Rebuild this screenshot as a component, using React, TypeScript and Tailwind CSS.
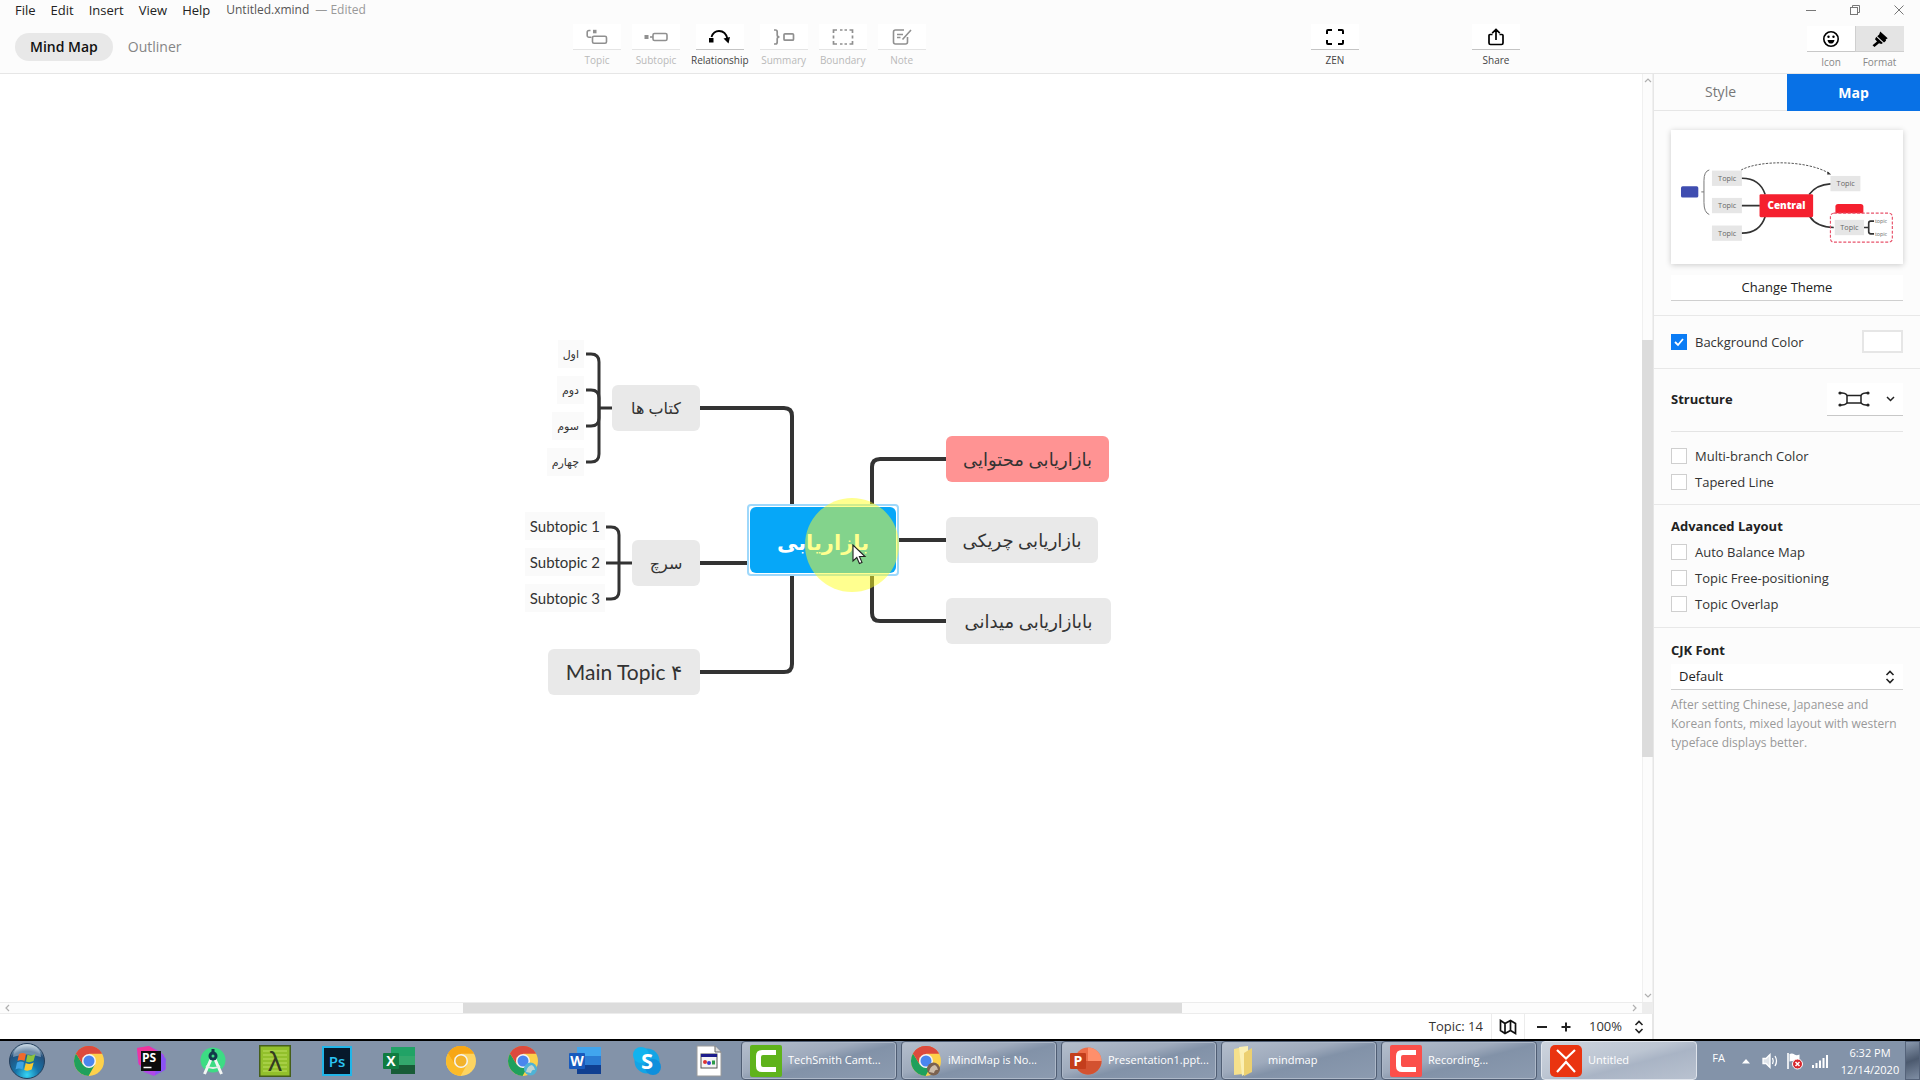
import React, { ReactNode } from "react";

/* ---------- header ---------- */

type ToolProps = { label: string; active?: boolean; children: ReactNode };

function Tool({ label, active = false, children }: ToolProps) {
  return (
    <button
      type="button"
      className={
        "flex min-w-12 flex-col items-center text-[10px] leading-4 " +
        (active ? "text-[#444]" : "text-[#b9b9b9]")
      }
    >
      <span
        className={
          "flex h-[26px] w-12 items-center justify-center border-b bg-white " +
          (active ? "border-[#c4c4c4] text-black" : "border-[#e4e4e4] text-[#909090]")
        }
      >
        {children}
      </span>
      <span className="mt-0.5">{label}</span>
    </button>
  );
}

function TopicIcon() {
  return (
    <svg width="22" height="16" viewBox="0 0 22 16" fill="none" stroke="currentColor" strokeWidth="1.6">
      <path d="M4.5 1.5H3A1.8 1.8 0 0 0 1.2 3.3V6.500A1.8 1.8 0 0 0 3 8.300h2.500" />
      <rect x="6.500" y="7.200" width="14" height="7" rx="1.5" />
      <rect x="7" y="0.800" width="3.500" height="3.500" fill="currentColor" stroke="none" />
    </svg>
  );
}

function SubtopicIcon() {
  return (
    <svg width="24" height="12" viewBox="0 0 24 12" fill="none" stroke="currentColor" strokeWidth="1.6">
      <rect x="0.500" y="4" width="4" height="4" fill="currentColor" stroke="none" />
      <path d="M6 6h3" />
      <rect x="9" y="2.500" width="14" height="7" rx="1.5" />
    </svg>
  );
}

function RelationshipIcon() {
  return (
    <svg width="24" height="16" viewBox="0 0 24 16" fill="none" stroke="currentColor" strokeWidth="1.8">
      <rect x="1" y="9" width="4.500" height="4.500" fill="currentColor" stroke="none" />
      <path d="M3.500 8C5 3.500 8 2 11 2c4.500 0 7.500 3.500 8.500 8" />
      <path d="M15.500 9.500l6.500-1.500-1.500 6.500z" fill="currentColor" stroke="none" />
    </svg>
  );
}

function SummaryIcon() {
  return (
    <svg width="22" height="16" viewBox="0 0 22 16" fill="none" stroke="currentColor" strokeWidth="1.7">
      <path d="M1 1h1.500Q4.200 1 4.200 3v3Q4.200 8 6.500 8 4.200 8 4.200 10v3q0 2-1.700 2H1" />
      <rect x="11" y="4.800" width="9.500" height="6.400" rx="1" />
    </svg>
  );
}

function BoundaryIcon() {
  return (
    <svg width="22" height="18" viewBox="0 0 22 18" fill="none" stroke="currentColor" strokeWidth="1.7">
      <path d="M1.500 5V2H5M8 2h2.500M12.500 2H15M17.500 2h3v3M20.500 7.500v3M20.500 13v3h-3M15 16h-2.500M10.500 16H8M5 16H1.500v-3M1.500 10.500v-3" />
    </svg>
  );
}

function NoteIcon() {
  return (
    <svg width="20" height="18" viewBox="0 0 20 18" fill="none" stroke="currentColor" strokeWidth="1.6">
      <path d="M12 2H3.500Q1.500 2 1.500 4v10q0 2 2 2h10q2 0 2-2V9" />
      <path d="M5 6.500h6M5 9.500h3.500M19 2l-8.500 9.500" />
    </svg>
  );
}

function ZenIcon() {
  return (
    <svg width="20" height="18" viewBox="0 0 20 18" fill="none" stroke="currentColor" strokeWidth="2">
      <path d="M2 6V3q0-1 1-1h4M13 2h4q1 0 1 1v3M18 12v3q0 1-1 1h-4M7 16H3q-1 0-1-1v-3" />
    </svg>
  );
}

function ShareIcon() {
  return (
    <svg width="18" height="18" viewBox="0 0 18 18" fill="none" stroke="currentColor" strokeWidth="1.7">
      <path d="M5.500 6.500H3q-1 0-1 1V15q0 1.500 1.500 1.500h11Q16 16.500 16 15V7.500q0-1-1-1h-2.500M9 12V1.800M5.200 5.200L9 1.500l3.800 3.700" />
    </svg>
  );
}

function Header() {
  return (
    <header className="flex h-[74px] shrink-0 flex-col border-b border-[#e6e6e6] bg-[#fcfcfc]">
      <div className="flex h-5 items-center justify-between pl-[15px]">
        <div className="flex items-center text-[13px] leading-5">
          <nav className="flex gap-[15px] text-[#222]">
            <button type="button">File</button>
            <button type="button">Edit</button>
            <button type="button">Insert</button>
            <button type="button">View</button>
            <button type="button">Help</button>
          </nav>
          <span className="ml-4 text-xs text-[#555]">Untitled.xmind</span>
          <span className="ml-1.5 text-xs text-[#999]">— Edited</span>
        </div>
        <div className="flex items-center gap-8 pr-[15px] text-[#777]">
          <button type="button" aria-label="Minimize">
            <svg width="12" height="12" viewBox="0 0 12 12" stroke="currentColor"><path d="M1 6.500h10" /></svg>
          </button>
          <button type="button" aria-label="Restore">
            <svg width="12" height="12" viewBox="0 0 12 12" fill="none" stroke="currentColor">
              <rect x="1.500" y="3.500" width="7" height="7" />
              <path d="M3.500 3.500v-2h7v7h-2" />
            </svg>
          </button>
          <button type="button" aria-label="Close">
            <svg width="12" height="12" viewBox="0 0 12 12" stroke="currentColor"><path d="M1.500 1.500l9 9M10.500 1.500l-9 9" /></svg>
          </button>
        </div>
      </div>
      <div className="flex flex-1 items-start">
        <div className="mt-[13px] flex w-[573px] items-center pl-[15px] text-sm">
          <button type="button" className="h-7 rounded-full bg-[#e8e8e8] px-[15px] font-semibold text-[#111]">
            Mind Map
          </button>
          <button type="button" className="ml-[15px] h-7 text-[#858585]">Outliner</button>
        </div>
        <div className="flex gap-[11px] pt-1">
          <Tool label="Topic"><TopicIcon /></Tool>
          <Tool label="Subtopic"><SubtopicIcon /></Tool>
          <Tool label="Relationship" active><RelationshipIcon /></Tool>
          <Tool label="Summary"><SummaryIcon /></Tool>
          <Tool label="Boundary"><BoundaryIcon /></Tool>
          <Tool label="Note"><NoteIcon /></Tool>
        </div>
        <div className="ml-auto flex pt-1 pr-4">
          <Tool label="ZEN" active><ZenIcon /></Tool>
          <div className="ml-[113px]">
            <Tool label="Share" active><ShareIcon /></Tool>
          </div>
          <div className="mt-0.5 ml-[287px] flex text-[10px] leading-4 text-[#888]">
            <button type="button" className="flex w-12 flex-col items-center">
              <span className="flex h-[26px] w-full items-center justify-center border-b border-[#c8c8c8] bg-white text-black">
                <svg width="18" height="18" viewBox="0 0 18 18" fill="none" stroke="currentColor" strokeWidth="1.6">
                  <circle cx="9" cy="9" r="7.200" />
                  <path d="M5.500 10h7c-.3 2.500-1.800 3.600-3.500 3.600S5.800 12.500 5.500 10z" fill="currentColor" stroke="none" />
                  <circle cx="6.500" cy="6.800" r="1.200" fill="currentColor" stroke="none" />
                  <circle cx="11.500" cy="6.800" r="1.200" fill="currentColor" stroke="none" />
                </svg>
              </span>
              <span className="mt-0.5">Icon</span>
            </button>
            <button type="button" className="flex w-[49px] flex-col items-center">
              <span className="flex h-[26px] w-full items-center justify-center border-b border-l border-[#cfcfcf] bg-[#e4e4e4] text-black">
                <svg width="18" height="18" viewBox="0 0 18 18" fill="currentColor">
                  <path d="M9.200 1.500l7.500 6.800-2 1.200.3 1.300-2 1.700-6.800-6.300 2-1.700z" />
                  <path d="M5.200 6.800l6.700 6.100-1.600 1.200-2.300-.8L3.500 17l-2-1.800L6 11.500l-2-2.300z" />
                </svg>
              </span>
              <span className="mt-0.5">Format</span>
            </button>
          </div>
        </div>
      </div>
    </header>
  );
}

/* ---------- mind map ---------- */

function Connectors() {
  return (
    <svg className="absolute inset-0" width="600" height="400" viewBox="521 338 600 400" fill="none" stroke="#333" strokeWidth="4">
      <path d="M700 408h84q8 0 8 8v94" />
      <path d="M700 672h84q8 0 8-8v-94" />
      <path d="M700 563h52" />
      <path d="M946 459h-66q-8 0-8 8v43" />
      <path d="M946 621h-66q-8 0-8-8v-43" />
      <path d="M946 540h-50" />
      <g strokeWidth="3">
        <path d="M586 354h5q8 0 8 8v92q0 8-8 8h-5" />
        <path d="M586 390h5q8 0 8 8v20q0 8-8 8h-5" />
        <path d="M599 408h14" />
        <path d="M606 527h5q8 0 8 8v56q0 8-8 8h-5" />
        <path d="M606 563h27" />
      </g>
    </svg>
  );
}

type NodeProps = { className: string; text: string };

function MainNode({ className, text }: NodeProps) {
  return (
    <div
      dir="auto"
      className={"absolute flex h-[46px] items-center justify-center rounded-md whitespace-nowrap text-[#333] " + className}
    >
      {text}
    </div>
  );
}

function SubNode({ className, text }: NodeProps) {
  return (
    <div
      dir="auto"
      className={"absolute flex h-7 items-center justify-center bg-[#fafafa] px-[5px] whitespace-nowrap text-[#333] " + className}
    >
      {text}
    </div>
  );
}

function MindMap() {
  return (
    <div className="relative h-[400px] w-[600px] font-['Lato','DejaVu_Sans',sans-serif]">
      <Connectors />
      <SubNode className="top-[2px] right-[537px] text-[11px]" text="اول" />
      <SubNode className="top-[38px] right-[537px] text-[11px]" text="دوم" />
      <SubNode className="top-[74px] right-[537px] text-[11px]" text="سوم" />
      <SubNode className="top-[110px] right-[537px] text-[11px]" text="چهارم" />
      <SubNode className="top-[174px] right-[516px] text-[15px]" text="Subtopic 1" />
      <SubNode className="top-[210px] right-[516px] text-[15px]" text="Subtopic 2" />
      <SubNode className="top-[246px] right-[516px] text-[15px]" text="Subtopic 3" />
      <MainNode className="top-[47px] left-[91px] w-[88px] bg-[#e9e9e9] text-base" text="کتاب ها" />
      <MainNode className="top-[202px] left-[111px] w-[68px] bg-[#e9e9e9] text-base" text="سرچ" />
      <MainNode className="top-[311px] left-[27px] w-[152px] bg-[#e9e9e9] text-[21px]" text="Main Topic ۴" />
      <MainNode className="top-[98px] left-[425px] w-[163px] bg-[#ff9393] text-lg" text="بازاریابی محتوایی" />
      <MainNode className="top-[179px] left-[425px] w-[152px] bg-[#e9e9e9] text-lg" text="بازاریابی چریکی" />
      <MainNode className="top-[260px] left-[425px] w-[165px] bg-[#e9e9e9] text-lg" text="بابازاریابی میدانی" />
      <div className="absolute top-[166px] left-[226px] h-[72px] w-[152px] rounded border-2 border-[#9ed8fb] bg-white p-px">
        <div dir="rtl" className="flex h-full items-center justify-center rounded-md bg-[#06a7f8] pt-1 text-[21px] font-bold text-white">
          بازاریابی
        </div>
      </div>
      <div className="absolute top-[160px] left-[284px] size-[94px] rounded-full bg-[#ffff20]/50" />
      <svg className="absolute top-[206px] left-[331px]" width="15" height="22" viewBox="0 0 15 22">
        <path d="M1 1v16l3.800-3.500 2.600 6 2.600-1.100-2.600-5.900H13z" fill="#fff" stroke="#222" strokeWidth="1.100" />
      </svg>
    </div>
  );
}

function Chevron({ d }: { d: string }) {
  return (
    <svg width="8" height="8" viewBox="0 0 8 8" fill="none" stroke="#b0b0b0" strokeWidth="1.200">
      <path d={d} />
    </svg>
  );
}

function UpDown() {
  return (
    <svg width="10" height="14" viewBox="0 0 10 14" fill="none" stroke="#222" strokeWidth="1.600">
      <path d="M1.500 5L5 1.500 8.500 5M1.500 9L5 12.500 8.500 9" />
    </svg>
  );
}

function StatusBar() {
  return (
    <div className="flex h-[25px] shrink-0 items-center justify-end border-r border-[#e6e6e6] bg-white pr-2 text-[13px] text-[#333]">
      <span className="mr-2">Topic: 14</span>
      <button type="button" aria-label="Map overview" className="flex h-full w-[34px] items-center justify-center border-x border-[#ececec]">
        <svg width="18" height="16" viewBox="0 0 18 16" fill="none" stroke="#111" strokeWidth="1.700">
          <path d="M1.500 1.500L6 4.500 11.500 1.500 16.500 4.500V14.500L11.500 11.500 6 14.500 1.500 11.500zM6 4.500v10M11.500 1.500v10" />
        </svg>
      </button>
      <button type="button" aria-label="Zoom out" className="ml-2.5 flex h-4 w-3.5 items-center justify-center">
        <span className="h-0.5 w-2.5 bg-[#222]" />
      </button>
      <button type="button" aria-label="Zoom in" className="ml-2.5">
        <svg width="14" height="14" viewBox="0 0 14 14" stroke="#222" strokeWidth="2"><path d="M2.500 7h9M7 2.500v9" /></svg>
      </button>
      <button type="button" className="ml-4 flex items-center gap-3">
        100%
        <UpDown />
      </button>
    </div>
  );
}

function Canvas() {
  return (
    <main className="flex min-w-0 flex-1 flex-col">
      <div className="flex min-h-0 flex-1">
        <div className="flex flex-1 items-center justify-center overflow-hidden bg-white">
          <MindMap />
        </div>
        <div className="flex w-[11px] flex-col items-center border-x border-[#f0f0f0] bg-[#fcfcfc] py-0.5">
          <Chevron d="M1 6l3-3 3 3" />
          <div className="flex-[256]" />
          <div className="w-[11px] flex-[417] bg-[#dcdcdc]" />
          <div className="flex-[235]" />
          <Chevron d="M1 2l3 3 3-3" />
        </div>
      </div>
      <div className="flex h-3 shrink-0 items-center border-y border-[#ececec] bg-[#fcfcfc] pl-1">
        <Chevron d="M5 1L2 4l3 3" />
        <div className="flex-[451]" />
        <div className="h-full flex-[719] bg-[#dcdcdc]" />
        <div className="flex-[448]" />
        <Chevron d="M3 1l3 3-3 3" />
        <div className="ml-1 h-full w-[11px] bg-[#ededed]" />
      </div>
      <StatusBar />
    </main>
  );
}

/* ---------- sidebar ---------- */

function Check({ label, checked = false }: { label: string; checked?: boolean }) {
  return (
    <label className="flex items-center gap-2 text-[13px] leading-[18px] text-[#333]">
      <span className="relative flex size-4">
        <input
          type="checkbox"
          defaultChecked={checked}
          className="peer size-4 appearance-none border border-[#cfcfcf] bg-white checked:border-[#0a7cf5] checked:bg-[#0a7cf5]"
        />
        <svg className="pointer-events-none absolute inset-0 hidden peer-checked:block" width="16" height="16" viewBox="0 0 16 16" fill="none" stroke="#fff" strokeWidth="1.800">
          <path d="M4 8l3 3 5-6" />
        </svg>
      </span>
      {label}
    </label>
  );
}

function ThemePreview() {
  return (
    <svg className="block w-full" viewBox="93 60 697 402" fontFamily="'Open Sans', sans-serif">
      <g fill="#e6e6e6">
        <rect x="216" y="182" width="90" height="46" />
        <rect x="216" y="264" width="90" height="46" />
        <rect x="216" y="347" width="90" height="46" />
        <rect x="572" y="198" width="90" height="46" />
        <rect x="585" y="330" width="88" height="46" />
      </g>
      <g fill="none" stroke="#333" strokeWidth="5">
        <path d="M306 205Q360 205 376 254M306 287h54M306 370Q360 370 376 320M572 222Q530 224 508 254M582 353Q530 352 510 320" />
        <path d="M673 353h14M703 334h-10q-6 0-6 6v26q0 6 6 6h10" strokeWidth="5" />
        <path d="M208 180Q192 184 192 212v66Q192 308 208 314M184 246h8" strokeWidth="3" stroke="#777" />
        <path d="M304 180C360 150 500 150 568 190" strokeWidth="3" stroke="#555" strokeDasharray="7 4" />
      </g>
      <path d="M574 194l-10-9-2 9z" fill="#333" />
      <rect x="123" y="229" width="52" height="34" rx="5" fill="#3f4db0" />
      <rect x="359" y="253" width="161" height="69" rx="4" fill="#f5202f" />
      <path d="M587 310v-20q0-8 8-8h68q8 0 8 8v20z" fill="#f5202f" />
      <rect x="572" y="310" width="186" height="87" rx="10" fill="none" stroke="#e8536b" strokeWidth="3.500" strokeDasharray="9 5" />
      <text x="440" y="297" textAnchor="middle" fontSize="30" fontWeight="800" fill="#fff">Central</text>
      <g fontSize="22" fill="#666" textAnchor="middle">
        <text x="262" y="213">Topic</text>
        <text x="262" y="295">Topic</text>
        <text x="262" y="378">Topic</text>
        <text x="618" y="229">Topic</text>
        <text x="629" y="361">Topic</text>
      </g>
      <g fontSize="16" fill="#666" textAnchor="middle">
        <text x="724" y="339">topic</text>
        <text x="724" y="378">topic</text>
      </g>
    </svg>
  );
}

function Sidebar() {
  return (
    <aside className="flex w-[267px] shrink-0 flex-col border-l border-[#e6e6e6] bg-[#fcfcfc]">
      <div className="flex h-[37px] text-sm">
        <button type="button" className="flex-1 border-b border-[#e6e6e6] text-[#777]">Style</button>
        <button type="button" className="flex-1 bg-[#0871e6] font-bold text-white">Map</button>
      </div>
      <section className="border-b border-[#e8e8e8] px-[17px] pt-[19px] pb-3.5">
        <div className="bg-white shadow-[0_1px_6px_rgba(0,0,0,0.2)]">
          <ThemePreview />
        </div>
        <button type="button" className="mt-[11px] h-[26px] w-full border-b border-[#cfcfcf] bg-white text-[13px] text-[#222]">
          Change Theme
        </button>
      </section>
      <section className="flex h-[53px] items-center justify-between border-b border-[#e8e8e8] px-[17px]">
        <Check label="Background Color" checked />
        <button type="button" aria-label="Pick background color" className="h-[23px] w-[41px] border-2 border-[#e6e6e6] bg-white" />
      </section>
      <section className="border-b border-[#e8e8e8] px-[17px]">
        <div className="flex h-[63px] items-center justify-between border-b border-[#e4e4e4]">
          <h2 className="text-[13px] font-bold text-[#222]">Structure</h2>
          <button type="button" aria-label="Choose structure" className="flex h-[33px] w-[76px] items-center justify-between border-b border-[#c8c8c8] bg-white pr-2 pl-[11px]">
            <svg width="32" height="16" viewBox="0 0 32 16" fill="none" stroke="#222" strokeWidth="1.500">
              <rect x="9" y="4.500" width="14" height="7.500" />
              <path d="M1 1.800q7 0 8 2.700M31 1.800q-7 0-8 2.700M1 14.200q7 0 8-2.400M31 14.200q-7 0-8-2.400" />
              <g fill="#222" stroke="none">
                <circle cx="2" cy="2" r="1.600" />
                <circle cx="30" cy="2" r="1.600" />
                <circle cx="2" cy="14" r="1.600" />
                <circle cx="30" cy="14" r="1.600" />
              </g>
            </svg>
            <svg width="9" height="6" viewBox="0 0 9 6" fill="none" stroke="#222" strokeWidth="1.500"><path d="M1 1l3.500 3.500L8 1" /></svg>
          </button>
        </div>
        <div className="flex flex-col gap-2 pt-[15px] pb-[13px]">
          <Check label="Multi-branch Color" />
          <Check label="Tapered Line" />
        </div>
      </section>
      <section className="border-b border-[#e8e8e8] px-[17px] pt-3 pb-3.5">
        <h2 className="text-[13px] leading-[18px] font-bold text-[#222]">Advanced Layout</h2>
        <div className="mt-2 flex flex-col gap-2">
          <Check label="Auto Balance Map" />
          <Check label="Topic Free-positioning" />
          <Check label="Topic Overlap" />
        </div>
      </section>
      <section className="px-[17px] pt-[13px]">
        <label htmlFor="cjk-font" className="block text-[13px] leading-[18px] font-bold text-[#222]">CJK Font</label>
        <div className="relative mt-[5px]">
          <select id="cjk-font" className="block h-[26px] w-full appearance-none border-b border-[#cfcfcf] bg-white pl-2 text-[13px] text-[#222]">
            <option>Default</option>
          </select>
          <span className="pointer-events-none absolute top-1.5 right-2"><UpDown /></span>
        </div>
        <p className="mt-[5px] text-xs leading-[19px] text-[#999]">
          After setting Chinese, Japanese and
          <br />
          Korean fonts, mixed layout with western
          <br />
          typeface displays better.
        </p>
      </section>
    </aside>
  );
}

/* ---------- taskbar ---------- */

function StartOrb() {
  return (
    <svg width="38" height="38" viewBox="0 0 38 38">
      <defs>
        <radialGradient id="orb" cx="50%" cy="90%" r="85%">
          <stop offset="0" stopColor="#35d5f5" />
          <stop offset="0.400" stopColor="#1673a8" />
          <stop offset="0.800" stopColor="#24507c" />
          <stop offset="1" stopColor="#9db7cc" />
        </radialGradient>
      </defs>
      <circle cx="19" cy="19" r="17.500" fill="url(#orb)" stroke="#243f5c" />
      <path d="M5 15a14 13 0 0 1 28 0q-14-5-28 0z" fill="#fff" opacity="0.350" />
      <path d="M11 12q4-2 7 0l-1.500 7q-3.500-2-7 0z" fill="#ef6a2c" />
      <path d="M19.500 12.500q4 2 8-.500l-2 7q-4 2-7.500.500z" fill="#8cc43e" />
      <path d="M9 20.500q4-2 7 0l-1.500 7q-3.500-2-7 0z" fill="#3fa3e4" />
      <path d="M17.700 21q4 2 8-.500l-2 7q-4 2-7.500.500z" fill="#fbc92e" />
    </svg>
  );
}

function Chrome({ canary = false, badge }: { canary?: boolean; badge?: string }) {
  const [top, right, left, mid] = canary
    ? ["#f7a614", "#fdd462", "#fbbb2a", "#f2b22c"]
    : ["#dc4a3d", "#fdd14b", "#1fa05c", "#4a86ee"];
  return (
    <svg className="shrink-0" width="32" height="32" viewBox="0 0 32 32">
      <circle cx="16" cy="16" r="15" fill={right} />
      <path d="M16 16L3 8.500A15 15 0 0 1 29 8.500H16z" fill={top} />
      <path d="M3 8.500A15 15 0 0 0 15.500 31l6.500-11.500L16 16 9.800 19.500z" fill={left} />
      <path d="M3 8.500A15 15 0 0 1 29 8.500H16a7.500 7.500 0 0 0-6.500 4L9.500 19z" fill={top} />
      <circle cx="16" cy="16" r="7" fill="#f4f4f4" />
      <circle cx="16" cy="16" r="5.500" fill={mid} />
      {badge ? <circle cx="23.500" cy="24" r="6.500" fill={badge} /> : null}
      {badge ? <path d="M19 27q1-6 6-7 3 2 3 5-3-1-4 3z" fill="#f0e3d0" opacity="0.700" /> : null}
    </svg>
  );
}

function PhpStorm() {
  return (
    <svg width="32" height="32" viewBox="0 0 32 32" fontFamily="'Open Sans', sans-serif">
      <path d="M2 3L14 1l8 4 7 5 2 14-12 7-10-4-6-9z" fill="#b14ae8" />
      <path d="M2 3L14 1l9 6-8 12-11 1z" fill="#f0359a" />
      <path d="M24 6l7 8-1 11-10 5z" fill="#8a53f5" />
      <rect x="6" y="6" width="20" height="20" fill="#0c0c0c" />
      <text x="7" y="17" fontSize="12" fontWeight="700" fill="#fff">PS</text>
      <path d="M8.500 22.500h8" stroke="#fff" strokeWidth="1.500" />
    </svg>
  );
}

function AndroidStudio() {
  return (
    <svg width="32" height="32" viewBox="0 0 32 32">
      <circle cx="16" cy="15" r="12.500" fill="#3ddc84" />
      <path d="M15 12L7.500 29M17 12l7.500 17" stroke="#f3f6f4" strokeWidth="3" />
      <path d="M9 21q7 4 14 0" stroke="#e6efe9" strokeWidth="2" fill="none" />
      <circle cx="16" cy="11" r="4.500" fill="#123a4b" />
      <path d="M16 4v5" stroke="#123a4b" strokeWidth="3" />
      <circle cx="16" cy="11" r="1.500" fill="#3ddc84" />
    </svg>
  );
}

function LambdaApp() {
  return (
    <svg width="32" height="32" viewBox="0 0 32 32" fontFamily="'Liberation Sans', sans-serif">
      <rect x="0.750" y="0.750" width="30.500" height="30.500" fill="#92c02c" stroke="#455f1a" strokeWidth="1.500" />
      <path d="M4 6h24M4 10h24M4 14h24M4 18h24M4 22h24M4 26h24" stroke="#aed34e" strokeWidth="1.500" />
      <text x="16" y="26" fontSize="28" textAnchor="middle" fill="#333b22">λ</text>
    </svg>
  );
}

function Photoshop() {
  return (
    <svg width="30" height="30" viewBox="0 0 30 30" fontFamily="'Open Sans', sans-serif">
      <rect x="1" y="1" width="28" height="28" fill="#06192b" stroke="#21b5e8" strokeWidth="2" />
      <text x="15" y="20.500" fontSize="15" fontWeight="600" textAnchor="middle" fill="#2bc4f3">Ps</text>
    </svg>
  );
}

type OfficeProps = { letter: string; a: string; b: string; c: string; tag: string; round?: boolean };

function Office({ letter, a, b, c, tag, round = false }: OfficeProps) {
  return (
    <svg className="shrink-0" width="32" height="32" viewBox="0 0 32 32" fontFamily="'Open Sans', sans-serif">
      {round ? (
        <g>
          <circle cx="18" cy="16" r="13.500" fill={a} />
          <path d="M18 2.500A13.500 13.500 0 0 1 31.500 16H18z" fill={b} />
          <path d="M4.500 16h27a13.500 13.500 0 0 1-27 0z" fill={c} />
        </g>
      ) : (
        <g>
          <rect x="8" y="2" width="24" height="27" rx="1.500" fill={b} />
          <rect x="8" y="2" width="24" height="9" fill={a} />
          <rect x="8" y="20" width="24" height="9" fill={c} />
        </g>
      )}
      <rect x="0" y="8" width="16" height="16" rx="1" fill={tag} />
      <text x="8" y="21" fontSize="14" fontWeight="700" textAnchor="middle" fill="#fff">{letter}</text>
    </svg>
  );
}

function Skype() {
  return (
    <svg width="30" height="30" viewBox="0 0 30 30" fontFamily="'Open Sans', sans-serif">
      <circle cx="15" cy="15" r="12.500" fill="#12a5e6" />
      <circle cx="9" cy="9" r="8" fill="#12b3ee" />
      <circle cx="21" cy="21" r="8" fill="#0f8fdc" />
      <text x="15" y="23" fontSize="22" fontWeight="700" textAnchor="middle" fill="#fff">S</text>
    </svg>
  );
}

function DocIcon() {
  return (
    <svg width="26" height="32" viewBox="0 0 26 32">
      <path d="M1 1h18l6 6v24H1z" fill="#fff" stroke="#9a9a9a" />
      <path d="M19 1v6h6" fill="#ddd" stroke="#666" />
      <rect x="5" y="9" width="16" height="14" fill="#f4f4f4" stroke="#555" />
      <rect x="5" y="9" width="16" height="3" fill="#1d1d8c" />
      <circle cx="9" cy="17" r="2" fill="#d33" />
      <circle cx="13" cy="18" r="2" fill="#3a3ad0" />
      <rect x="16" y="15.500" width="3" height="4" fill="#2a9a4a" />
    </svg>
  );
}

function Camtasia({ fill }: { fill: string }) {
  return (
    <svg className="shrink-0" width="32" height="32" viewBox="0 0 32 32">
      <rect width="32" height="32" rx="2" fill={fill} />
      <path d="M26 5v5H13q-2 0-2 2v8q0 2 2 2h13v5H12q-6 0-6-6V11q0-6 6-6z" fill="#fff" />
    </svg>
  );
}

function Folder() {
  return (
    <svg className="shrink-0" width="32" height="32" viewBox="0 0 32 32">
      <path d="M4 4l9-2v27l-9 1z" fill="#f5e08c" />
      <path d="M9 2l9-1v26l-6 4z" fill="#fbf0b4" />
      <path d="M14 8l8-5v24l-8 4z" fill="#ecd070" />
    </svg>
  );
}

function XMind() {
  return (
    <svg className="shrink-0" width="32" height="32" viewBox="0 0 32 32">
      <rect width="32" height="32" rx="5" fill="#ea3410" />
      <path d="M7 5l9 8.500L25 5M7 27l9-10L25 27" fill="none" stroke="#fff" strokeWidth="2.200" />
    </svg>
  );
}

function Launcher({ label, children }: { label: string; children: ReactNode }) {
  return (
    <button type="button" aria-label={label} className="flex w-[62px] items-center justify-center">
      {children}
    </button>
  );
}

function Task({ label, active = false, children }: ToolProps) {
  return (
    <button
      type="button"
      className={
        "flex h-full w-[156px] items-center gap-1.5 rounded-sm border px-2 text-left text-[11px] whitespace-nowrap text-white " +
        (active
          ? "border-[#dfe4ec] bg-[linear-gradient(165deg,#cdd4de_0%,#bcc5d2_45%,#a9b4c5_60%,#b9c2d0_100%)]"
          : "border-[#4f5d73] bg-[linear-gradient(165deg,#b4becc_0%,#9eaabc_40%,#8292a8_55%,#8c9bb0_100%)] shadow-[inset_0_0_0_1px_#adb8c8]")
      }
    >
      {children}
      <span>{label}</span>
    </button>
  );
}

function Taskbar() {
  return (
    <footer className="flex h-[41px] shrink-0 border-t-2 border-black bg-[#8393a9] text-white">
      <div className="flex w-[741px] shrink-0 items-center">
        <button type="button" aria-label="Start" className="flex w-[58px] items-center justify-center pr-1">
          <StartOrb />
        </button>
        <Launcher label="Chrome"><Chrome /></Launcher>
        <Launcher label="PhpStorm"><PhpStorm /></Launcher>
        <Launcher label="Android Studio"><AndroidStudio /></Launcher>
        <Launcher label="Cmder"><LambdaApp /></Launcher>
        <Launcher label="Photoshop"><Photoshop /></Launcher>
        <Launcher label="Excel"><Office letter="X" a="#21a366" b="#33a86c" c="#185c37" tag="#107c41" /></Launcher>
        <Launcher label="Chrome Canary"><Chrome canary /></Launcher>
        <Launcher label="Chrome profile"><Chrome badge="#4fb3d6" /></Launcher>
        <Launcher label="Word"><Office letter="W" a="#41a5ee" b="#2b7cd3" c="#103f91" tag="#185abd" /></Launcher>
        <Launcher label="Skype"><Skype /></Launcher>
        <Launcher label="Document"><DocIcon /></Launcher>
      </div>
      <div className="flex gap-1">
        <Task label="TechSmith Camt..."><Camtasia fill="#5fb31b" /></Task>
        <Task label="iMindMap is No..."><Chrome badge="#7b6250" /></Task>
        <Task label="Presentation1.ppt..."><Office round letter="P" a="#ed6c47" b="#ff8f6b" c="#d35230" tag="#c43e1c" /></Task>
        <Task label="mindmap"><Folder /></Task>
        <Task label="Recording..."><Camtasia fill="#fb4f4a" /></Task>
        <Task label="Untitled" active><XMind /></Task>
      </div>
      <div className="ml-auto flex items-center text-[11px]">
        <span className="mr-[17px] pb-1">FA</span>
        <svg className="mr-3" width="8" height="6" viewBox="0 0 8 6" fill="#fff"><path d="M4 1l4 4.500H0z" /></svg>
        <svg className="mr-[7px]" width="17" height="16" viewBox="0 0 17 16" fill="none" stroke="#fff" strokeWidth="1.300">
          <path d="M1 5.500h3l4-4v13l-4-4H1z" fill="#dfe4ea" />
          <path d="M10.500 5q1.500 3 0 6M13 3q3 5 0 10" />
        </svg>
        <svg className="mr-[9px]" width="17" height="18" viewBox="0 0 17 18">
          <path d="M2 1v16" stroke="#fff" strokeWidth="1.600" />
          <path d="M3.500 2q3-1 5 .500t5 0v7q-3 1-5 0t-5 0z" fill="#fff" />
          <circle cx="11.500" cy="12" r="5" fill="#d8262c" stroke="#fff" />
          <path d="M9.500 10l4 4M13.500 10l-4 4" stroke="#fff" strokeWidth="1.500" />
        </svg>
        <svg width="16" height="14" viewBox="0 0 16 14" fill="#fff">
          <path d="M0 11h2v3H0zM3.500 9h2v5h-2zM7 6.500h2V14H7zM10.500 4h2v10h-2zM14 1h2v13h-2z" />
        </svg>
        <div className="mr-[3px] ml-2.5 w-[64px] text-center leading-[17px]">
          <div>6:32 PM</div>
          <div>12/14/2020</div>
        </div>
        <button
          type="button"
          aria-label="Show desktop"
          className="h-full w-[15px] border border-[#55637a] bg-[linear-gradient(160deg,#8a99ae,#4c5a6f_50%,#7f8ea4)]"
        />
      </div>
    </footer>
  );
}

export default function App() {
  return (
    <div className="flex h-screen flex-col overflow-hidden bg-white font-['Open_Sans',sans-serif]">
      <Header />
      <div className="flex min-h-0 flex-1">
        <Canvas />
        <Sidebar />
      </div>
      <Taskbar />
    </div>
  );
}
